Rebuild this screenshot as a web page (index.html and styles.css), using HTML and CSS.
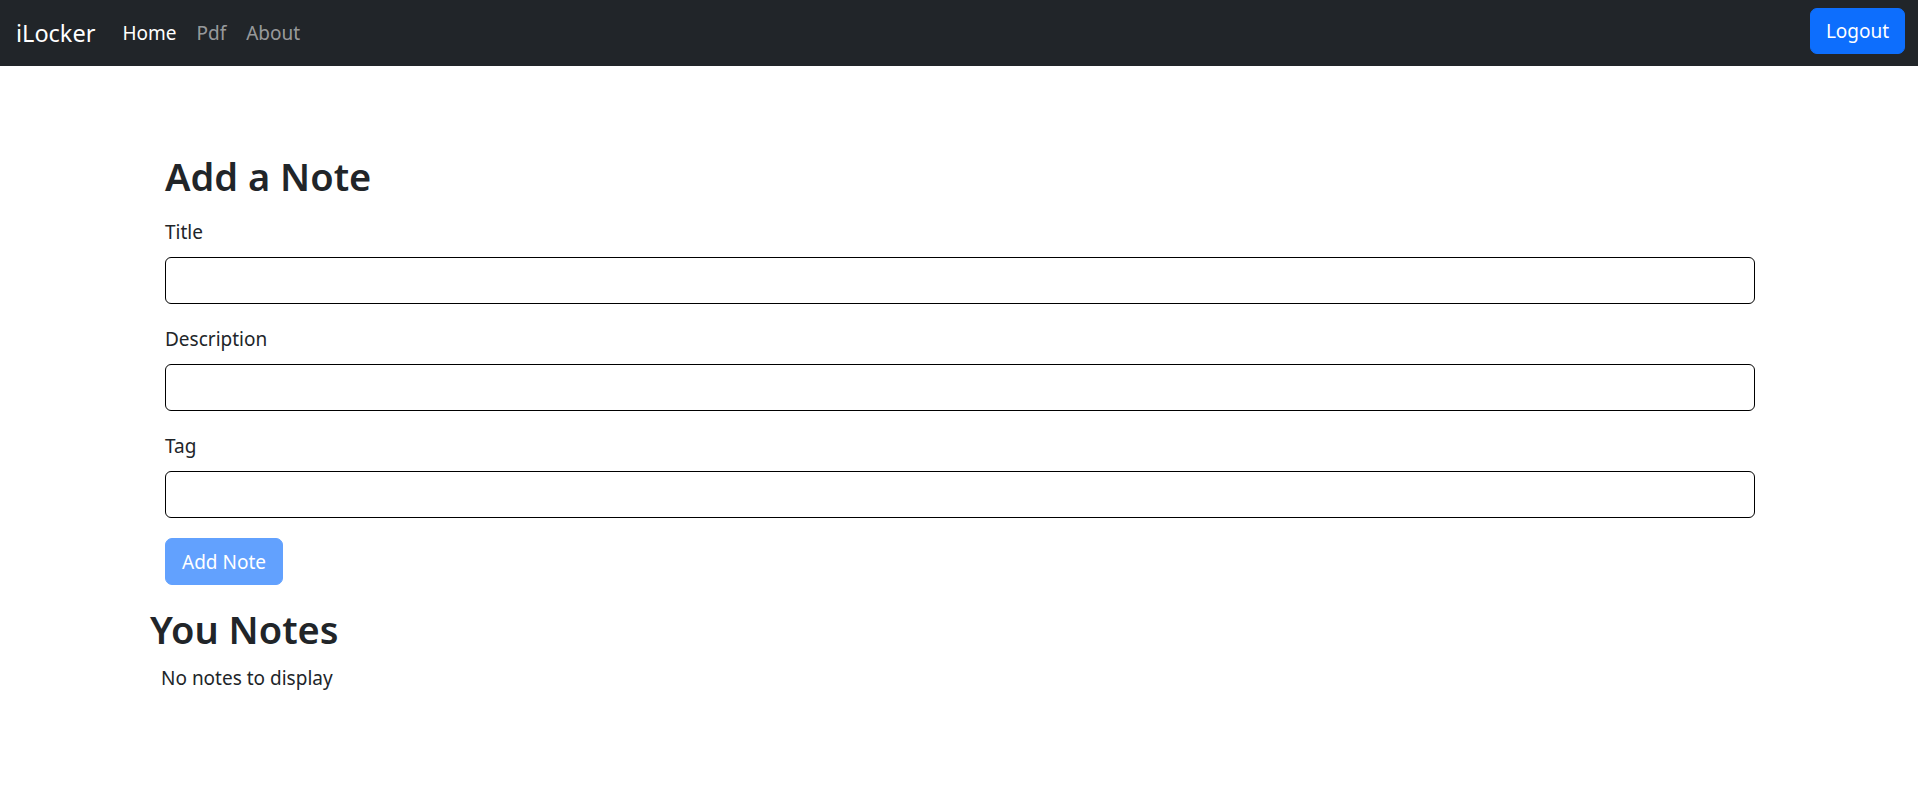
FILE: index.html
```html
<!DOCTYPE html>
<html lang="en">
<head>
<meta charset="utf-8">
<title>iLocker</title>
<link rel="stylesheet" href="styles.css">
</head>
<body>
<nav class="navbar">
  <a class="brand" href="#">iLocker</a>
  <ul class="nav-links">
    <li><a class="nav-link active" href="#">Home</a></li>
    <li><a class="nav-link" href="#">Pdf</a></li>
    <li><a class="nav-link" href="#">About</a></li>
  </ul>
  <button class="btn btn-logout">Logout</button>
</nav>
<main class="main">
  <section class="add-note">
    <h2 class="heading">Add a Note</h2>
    <form class="note-form">
      <div class="field">
        <label class="label" for="title">Title</label>
        <input class="input" id="title" type="text">
      </div>
      <div class="field">
        <label class="label" for="description">Description</label>
        <input class="input" id="description" type="text">
      </div>
      <div class="field">
        <label class="label" for="tag">Tag</label>
        <input class="input" id="tag" type="text">
      </div>
      <button class="btn btn-add" type="button" disabled>Add Note</button>
    </form>
  </section>
  <section class="notes">
    <h2 class="heading">You Notes</h2>
    <div class="empty">No notes to display</div>
  </section>
</main>
</body>
</html>
```
FILE: styles.css
```css
* { box-sizing: border-box; }
body {
  margin: 0;
  font-family: "Noto Sans", "Open Sans", sans-serif;
  color: #212529;
  background: #fff;
}
.navbar {
  height: 66px;
  background: #212529;
  display: flex;
  align-items: center;
  padding: 0 13px 0 16px;
}
.brand {
  font-size: 23.5px;
  line-height: 36px;
  color: #fff;
  text-decoration: none;
  margin-right: 17px;
}
.nav-links {
  list-style: none;
  display: flex;
  margin: 0;
  padding: 0;
}
.nav-link {
  display: block;
  font-size: 19px;
  line-height: 30px;
  padding: 0 10px;
  color: rgba(255, 255, 255, 0.55);
  text-decoration: none;
}
.nav-link.active { color: #fff; }
.btn {
  font-family: inherit;
  font-size: 19px;
  line-height: 30px;
  border: 1px solid transparent;
  border-radius: 7px;
  color: #fff;
  padding: 7px 15px;
  height: 46px;
}
.btn-logout {
  margin-left: auto;
  margin-top: -4px;
  width: 95px;
  padding: 7px 0;
  background: #0d6efd;
  border-color: #0d6efd;
}
.main {
  padding-top: 86px;
}
.add-note {
  margin-left: 165px;
  width: 1590px;
}
.heading {
  font-size: 38px;
  line-height: 48px;
  font-weight: 600;
  margin: 0 0 17px;
}
.field { margin-bottom: 20px; }
.label {
  display: block;
  font-size: 19px;
  line-height: 30px;
  margin-bottom: 10px;
}
.input {
  display: block;
  width: 100%;
  height: 47px;
  border: 1px solid #000;
  border-radius: 6px;
  font-family: inherit;
  font-size: 19px;
  padding: 7px 15px;
  background: #fff;
}
.btn-add {
  background: #62a1fe;
  border-color: #62a1fe;
  width: 118px;
  height: 47px;
  padding: 7px 0;
}
.notes {
  margin-left: 150px;
  margin-top: 20px;
}
.notes .heading { margin-bottom: 10px; }
.empty {
  font-size: 19px;
  line-height: 30px;
  padding-left: 11px;
}
```
